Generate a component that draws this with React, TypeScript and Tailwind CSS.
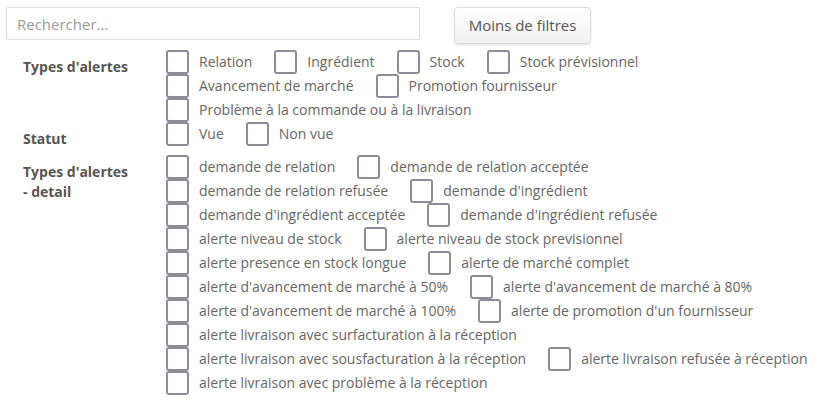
import React from "react";

const groups: { label: string; rows: string[][]; mt: string }[] = [
  {
    label: "Types d'alertes",
    mt: "mt-0",
    rows: [
      ["Relation", "Ingrédient", "Stock", "Stock prévisionnel"],
      ["Avancement de marché", "Promotion fournisseur"],
      ["Problème à la commande ou à la livraison"],
    ],
  },
  {
    label: "Statut",
    mt: "mt-0",
    rows: [["Vue", "Non vue"]],
  },
  {
    label: "Types d'alertes - detail",
    mt: "mt-[6px]",
    rows: [
      ["demande de relation", "demande de relation acceptée"],
      ["demande de relation refusée", "demande d'ingrédient"],
      ["demande d'ingrédient acceptée", "demande d'ingrédient refusée"],
      ["alerte niveau de stock", "alerte niveau de stock previsionnel"],
      ["alerte presence en stock longue", "alerte de marché complet"],
      ["alerte d'avancement de marché à 50%", "alerte d'avancement de marché à 80%"],
      ["alerte d'avancement de marché à 100%", "alerte de promotion d'un fournisseur"],
      ["alerte livraison avec surfacturation à la réception"],
      ["alerte livraison avec sousfacturation à la réception", "alerte livraison refusée à réception"],
      ["alerte livraison avec problème à la réception"],
    ],
  },
];

function Item({ text }: { text: string }) {
  return (
    <label className="flex items-center mr-[22px] cursor-pointer">
      <span className="block w-[23px] h-[24px] border-2 border-[#8c8b99] rounded-[3px] bg-white shrink-0" />
      <span className="ml-[10px] whitespace-nowrap text-[14px] leading-[24px] text-[#666666]">{text}</span>
    </label>
  );
}

export default function App() {
  return (
    <div
      className="w-[820px] h-[401px] bg-white overflow-hidden"
      style={{ fontFamily: "'Open Sans', 'Noto Sans', sans-serif" }}
    >
      <div className="flex items-start pt-[7px] pl-[6px] h-[44px]">
        <input
          type="text"
          placeholder="Rechercher..."
          className="w-[414px] h-[33px] border border-[#dddddd] rounded-[2px] px-[10px] text-[15px] text-[#555] placeholder:text-[#9a9a9a] outline-none"
        />
        <button className="ml-[34px] w-[137px] h-[37px] rounded-[4px] border border-[#dcdcdc] bg-gradient-to-b from-white to-[#f1f1f1] shadow-[0_1px_2px_rgba(0,0,0,0.12)] text-[15px] text-[#555]">
          Moins de filtres
        </button>
      </div>
      <div className="mt-[6px]">
        {groups.map((g) => (
          <div key={g.label} className={`flex ${g.mt}`}>
            <div className="w-[166px] pl-[23px] pr-[35px] pt-[7px] shrink-0">
              <div className="text-[14px] leading-[20px] font-bold text-[#555555]">{g.label}</div>
            </div>
            <div className="flex flex-col">
              {g.rows.map((r, i) => (
                <div key={i} className="flex items-center h-[24px]">
                  {r.map((t) => (
                    <Item key={t} text={t} />
                  ))}
                </div>
              ))}
            </div>
          </div>
        ))}
      </div>
    </div>
  );
}
